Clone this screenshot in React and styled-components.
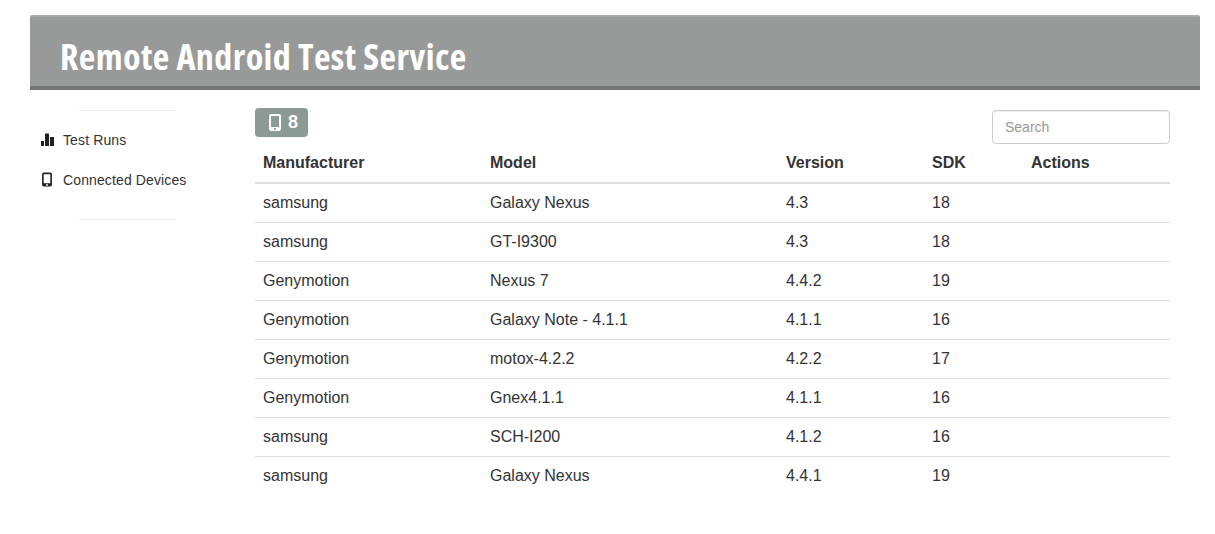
import React from "react";
import styled, { createGlobalStyle } from "styled-components";

const GlobalStyle = createGlobalStyle`
  html, body {
    margin: 0;
    padding: 0;
    background: #fff;
    font-family: "Liberation Sans", Arial, sans-serif;
    font-size: 16px;
    color: #333;
  }
`;

const Page = styled.div`
  padding: 15px 15px 0 30px;
`;

const Header = styled.header`
  height: 75px;
  box-sizing: border-box;
  border-top: 2px solid #a9aaa9;
  border-bottom: 4px solid #737573;
  border-radius: 2px 2px 0 0;
  background: #989a99;
  padding: 18px 0 0 30px;
`;

const Title = styled.h1`
  margin: 0;
  font-family: "Open Sans", sans-serif;
  font-stretch: 75%;
  font-size: 36px;
  letter-spacing: 0.41px;
  line-height: 44px;
  font-weight: 700;
  color: #fff;
`;

const Body = styled.div`
  display: flex;
`;

const Sidebar = styled.nav`
  width: 225px;
  flex: none;
  padding-top: 20px;
`;

const Divider = styled.hr`
  width: 97px;
  height: 1px;
  margin: 0 0 0 49px;
  border: 0;
  background: #eee;
`;

const NavList = styled.ul`
  list-style: none;
  margin: 0;
  padding: 9px 0 19px;
`;

const NavItem = styled.li`
  display: flex;
  align-items: center;
  height: 40px;
  padding-left: 10px;
  font-size: 14px;
  letter-spacing: 0.12px;
  color: #333;
`;

const NavIcon = styled.svg`
  width: 14px;
  height: 14px;
  margin-right: 9px;
  overflow: visible;
  fill: #222;
`;

const Content = styled.main`
  width: 915px;
  flex: none;
`;

const Toolbar = styled.div`
  display: flex;
  justify-content: space-between;
  align-items: flex-start;
  box-sizing: border-box;
  height: 54px;
  padding-top: 18px;
`;

const CountBadge = styled.span`
  display: flex;
  align-items: center;
  box-sizing: border-box;
  width: 53px;
  height: 29px;
  margin-right: auto;
  padding-left: 14px;
  border-radius: 4px;
  background: #8b9a94;
  color: #fff;
  font-size: 18px;
  font-weight: 700;
`;

const BadgeIcon = styled.svg`
  width: 12px;
  height: 17px;
  margin-right: 7px;
  fill: #fff;
`;

const Search = styled.input`
  width: 178px;
  height: 34px;
  margin-top: 2px;
  box-sizing: border-box;
  padding: 6px 12px;
  border: 1px solid #ccc;
  border-radius: 4px;
  box-shadow: inset 0 1px 1px rgba(0, 0, 0, 0.075);
  font-family: inherit;
  font-size: 14px;
  color: #555;

  &::placeholder {
    color: #999;
    opacity: 1;
  }
`;

const Table = styled.table`
  width: 915px;
  table-layout: fixed;
  border-collapse: collapse;
  font-size: 16px;
`;

const HeadCell = styled.th`
  width: ${(p) => p.$width}px;
  height: 39px;
  box-sizing: border-box;
  padding: 8px 8px 9px;
  border-bottom: 2px solid #ddd;
  text-align: left;
  font-weight: 700;
`;

const Cell = styled.td`
  height: 39px;
  box-sizing: border-box;
  padding: 8px;
  border-top: 1px solid #ddd;
  line-height: 22px;
`;

const Row = styled.tr`
  &:first-child td {
    border-top: 0;
  }
`;

const columns = [
  { label: "Manufacturer", width: 227 },
  { label: "Model", width: 296 },
  { label: "Version", width: 146 },
  { label: "SDK", width: 99 },
  { label: "Actions", width: 147 },
];

const devices = [
  ["samsung", "Galaxy Nexus", "4.3", "18"],
  ["samsung", "GT-I9300", "4.3", "18"],
  ["Genymotion", "Nexus 7", "4.4.2", "19"],
  ["Genymotion", "Galaxy Note - 4.1.1", "4.1.1", "16"],
  ["Genymotion", "motox-4.2.2", "4.2.2", "17"],
  ["Genymotion", "Gnex4.1.1", "4.1.1", "16"],
  ["samsung", "SCH-I200", "4.1.2", "16"],
  ["samsung", "Galaxy Nexus", "4.4.1", "19"],
];

const phonePath =
  "M2 0h8a2 2 0 0 1 2 2v13a2 2 0 0 1-2 2H2a2 2 0 0 1-2-2V2a2 2 0 0 1 2-2zm0 2v11h8V2H2zm4 12a1.1 1.1 0 1 0 0 2.2 1.1 1.1 0 0 0 0-2.2z";

const App = () => {
  return (
    <Page>
      <GlobalStyle />
      <Header>
        <Title>Remote Android Test Service</Title>
      </Header>
      <Body>
        <Sidebar>
          <Divider />
          <NavList>
            <NavItem>
              <NavIcon viewBox="0 0 14 14">
                <path d="M1 8h3v5H1zM5 0.5h4V13H5zM10 4h4v9h-4z" />
              </NavIcon>
              Test Runs
            </NavItem>
            <NavItem>
              <NavIcon viewBox="-2 0.6 16 17">
                <path d={phonePath} fillRule="evenodd" />
              </NavIcon>
              Connected Devices
            </NavItem>
          </NavList>
          <Divider />
        </Sidebar>
        <Content>
          <Toolbar>
            <CountBadge>
              <BadgeIcon viewBox="0 0 12 17">
                <path d={phonePath} fillRule="evenodd" />
              </BadgeIcon>
              8
            </CountBadge>
            <Search placeholder="Search" />
          </Toolbar>
          <Table>
            <thead>
              <tr>
                {columns.map((col) => (
                  <HeadCell key={col.label} $width={col.width}>
                    {col.label}
                  </HeadCell>
                ))}
              </tr>
            </thead>
            <tbody>
              {devices.map((device, i) => (
                <Row key={i}>
                  {device.map((value, j) => (
                    <Cell key={j}>{value}</Cell>
                  ))}
                  <Cell />
                </Row>
              ))}
            </tbody>
          </Table>
        </Content>
      </Body>
    </Page>
  );
};

export default App;
